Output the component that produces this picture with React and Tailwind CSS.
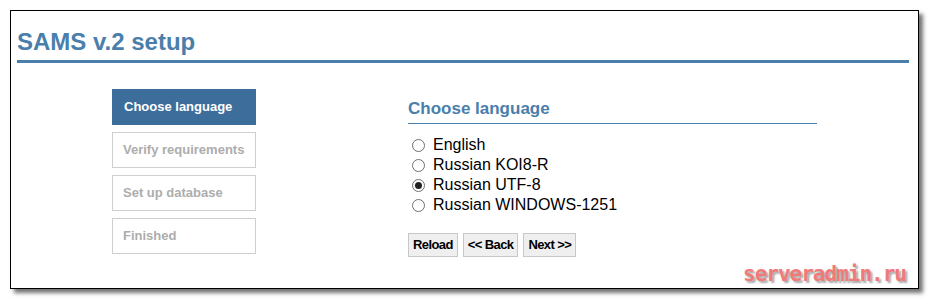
const steps = [
  { label: 'Choose language', active: true },
  { label: 'Verify requirements' },
  { label: 'Set up database' },
  { label: 'Finished' },
];

const languages = [
  { label: 'English' },
  { label: 'Russian KOI8-R' },
  { label: 'Russian UTF-8', checked: true },
  { label: 'Russian WINDOWS-1251' },
];

const Radio = ({ checked }) => (
  <span className="w-[13px] h-[13px] rounded-full border border-[#6f6f6f] bg-white flex items-center justify-center shrink-0">
    {checked && <span className="w-[7px] h-[7px] rounded-full bg-[#222]" />}
  </span>
);

export default function App() {
  return (
    <div className="w-[930px] h-[300px] bg-white pl-[10px] pt-[10px] font-['Liberation_Sans',Arial,sans-serif]">
      <div className="relative w-[909px] h-[279px] border border-black bg-white shadow-[4px_4px_4px_rgba(0,0,0,0.55)]">
        {/* Header */}
        <div className="pl-[6px] pt-[17px]">
          <h1 className="text-[24px] leading-[28px] font-bold text-[#4a7eab]">SAMS v.2 setup</h1>
          <div className="mt-[4px] w-[892px] h-[3px] bg-[#4a7eab]" />
        </div>

        <div className="flex pl-[101px] pt-[26px]">
          {/* Steps */}
          <div className="w-[144px] flex flex-col gap-[7px]">
            {steps.map((s) =>
              s.active ? (
                <div
                  key={s.label}
                  className="h-[36px] bg-[#3d6e9b] border border-[#3d6e9b] pl-[11px] flex items-center text-[13px] font-bold text-white"
                >
                  {s.label}
                </div>
              ) : (
                <div
                  key={s.label}
                  className="h-[36px] border border-[#cfcfcf] pl-[10px] flex items-center text-[13px] font-bold text-[#adadad]"
                >
                  {s.label}
                </div>
              )
            )}
          </div>

          {/* Content */}
          <div className="ml-[152px] w-[409px]">
            <h2 className="pt-[10px] text-[17px] leading-[20px] font-bold text-[#4a7eab]">Choose language</h2>
            <div className="mt-[4px] h-px bg-[#4a7eab]" />
            <div className="mt-[11px] flex flex-col">
              {languages.map((l) => (
                <label key={l.label} className="h-[20px] flex items-center gap-[8px] pl-[4px] text-[16px] text-black">
                  <Radio checked={l.checked} />
                  <span>{l.label}</span>
                </label>
              ))}
            </div>
            <div className="mt-[18px] flex gap-[5px]">
              {['Reload', '<< Back', 'Next >>'].map((b) => (
                <button
                  key={b}
                  className="h-[24px] px-[4px] bg-[#efefef] border border-[#c8c8c8] text-[13px] font-bold tracking-[-0.6px] text-black"
                >
                  {b}
                </button>
              ))}
            </div>
          </div>
        </div>

        {/* Watermark */}
        <div className="absolute right-[12px] bottom-[2px] text-[21px] leading-[24px] font-bold font-['DejaVu_Sans_Mono',monospace] text-[#f07a7a] [text-shadow:2px_2px_2px_rgba(0,0,0,0.35)] tracking-[-1px]">
          serveradmin.ru
        </div>
      </div>
    </div>
  );
}
